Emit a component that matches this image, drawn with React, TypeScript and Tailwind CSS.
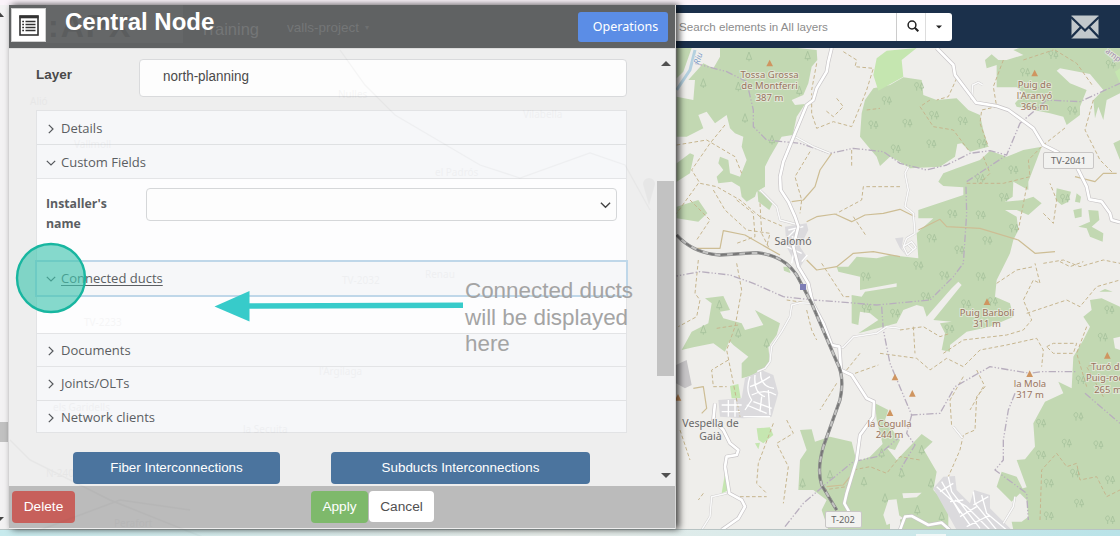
import React from "react";

const PINE = "M0 -14 L-8 8 H8 Z M0 8 V14";
const OAK = "M-7 12 V2 M-7 2 C-16 0 -14 -12 -7 -12 C0 -12 0 0 -7 2 M8 12 V4 M8 -12 L2 4 H14 Z";

// Map geometry is expressed in thirds of a pixel.
const forests = [
  "M150 144 L345 140 L440 150 L442 180 L425 200 L415 250 L400 285 L365 300 L375 315 L405 312 L380 350 L368 405 L335 410 L300 470 L285 500 L285 560 L260 575 L255 590 L230 605 L215 590 L210 560 L185 545 L145 550 L140 530 L160 510 L145 490 L150 470 L175 480 L180 520 L210 530 L230 480 L215 440 L220 410 L195 400 L180 385 L170 345 L135 370 L110 335 L85 345 L100 385 L50 410 L20 410 L20 290 L70 300 L75 240 L55 240 L100 190 L130 205 L150 170 Z",
  "M20 144 L65 144 L40 215 L20 235 Z",
  "M20 490 L60 460 L72 465 L60 520 L20 545Z",
  "M20 620 L85 600 L112 640 L85 665 L20 655Z",
  "M262 570 L310 605 L298 630 L265 605Z",
  "M340 800 L355 800 L362 820 L342 812Z",
  "M660 255 L700 232 L755 240 L760 285 L800 300 L860 295 L895 330 L930 345 L940 390 L955 440 L900 455 L875 430 L862 432 L855 470 L810 500 L720 505 L680 480 L660 470 L630 498 L620 470 L570 410 L575 340 L585 300 L610 265 Z",
  "M945 180 L965 163 L985 180 L1010 180 L1060 165 L1030 150 L1060 140 H1350 V280 L1310 300 L1300 360 L1285 320 L1275 355 L1270 300 L1300 270 L1260 222 L1170 205 L1160 212 L1200 250 L1250 270 L1230 320 L1230 345 L1190 375 L1180 350 L1140 340 L1040 320 L1035 310 L1060 280 L1040 262 L980 262 L980 195 L950 205Z",
  "M805 545 L820 520 L860 505 L930 480 L960 452 L1010 470 L1060 450 L1115 440 L1100 480 L1075 545 L1075 570 L1030 545 L1028 590 L1005 605 L1060 600 L1090 590 L1115 610 L1075 645 L1040 630 L1005 630 L1040 650 L1045 690 L1030 720 L1020 760 L1000 800 L980 840 L975 890 L1020 910 L1030 950 L960 980 L890 995 L840 1035 L840 1055 L815 1050 L825 1000 L810 970 L845 965 L790 960 L875 855 L865 845 L845 865 L770 950 L760 920 L740 915 L700 930 L680 970 L565 1000 L625 960 L600 940 L570 935 L565 975 L545 970 L545 885 L575 890 L585 875 L680 860 V850 L570 870 L570 830 L505 815 L500 800 L535 800 L560 770 L620 775 L660 765 L745 775 L740 700 L790 655 L745 655 L745 630 L880 585 V562 L820 558Z",
  "M1160 565 L1203 575 L1195 605 L1175 615 L1157 600Z", "M1220 580 L1233 590 L1230 608 L1215 605Z", "M1210 630 L1235 625 V650 L1215 655Z",
  "M1255 630 L1285 632 L1288 660 L1265 680 L1300 700 L1298 725 L1260 710 L1250 685 L1225 680 L1260 665Z", "M1330 430 L1350 420 V480Z",
  "M105 895 L160 888 L180 930 L150 935 L160 955 L215 970 L225 990 L280 975 L255 930 L330 970 L320 1005 L295 1040 L300 1090 L250 1125 L215 1135 V1090 L235 1070 L190 1035 L178 1022 L165 1055 L130 1030 L70 1042 L35 1050 L65 995 L115 970 L125 910Z",
  "M390 1290 L425 1288 L435 1325 L480 1310 L545 1325 L560 1385 L600 1370 L640 1330 L680 1380 L755 1302 L788 1325 L762 1350 L800 1415 L790 1470 L835 1520 V1590 H475 L455 1530 L470 1500 L430 1470 H385 L390 1380 L410 1350Z",
  "M615 1210 L655 1230 L645 1260 L690 1320 L675 1350 L640 1340 L620 1260Z",
  "M1260 900 L1295 895 L1350 920 V1590 H1030 L1025 1565 H1055 L1075 1550 L1070 1500 L1040 1470 L1070 1462 L1040 1380 L1065 1378 L1095 1340 L1090 1270 L1125 1205 L1180 1180 L1165 1145 L1205 1165 L1210 1070 L1240 1020 L1260 980 L1240 950 L1265 930Z",
  "M995 1415 L1040 1430 L1060 1470 L1025 1505 L980 1460Z", "M1288 875 L1305 867 L1328 875Z",
];
const meadows = ["M620 175 L650 152 L740 144 L695 180 L700 230 L625 272 L610 225Z", "M180 1158 L205 1152 L212 1195 L185 1195Z", "M260 1285 L300 1282 L310 1305 L280 1330 L265 1320Z", "M255 1330 L270 1328 L265 1348Z", "M165 1420 L178 1470 L155 1480Z", "M1335 215 L1350 205 V250Z"];
const clearings = ["M1330 1015 L1350 1010 V1050 L1335 1045Z", "M655 1500 L680 1498 L678 1540 L700 1555 L650 1575 L640 1545Z", "M660 1500 L680 1500 L695 1590 H660Z", "M697 1480 L755 1478 L740 1492 L700 1495Z"];
const built = ["M225 1135 L275 1110 L310 1125 L325 1180 L305 1250 L220 1255 L150 1250 L145 1200 L215 1195Z", "M790 1465 L820 1430 L855 1428 L860 1470 L900 1510 L912 1470 L960 1485 V1525 L1025 1590 H860 Z", "M345 680 L410 670 L415 690 L390 740 L410 770 L385 810 L350 740Z", "M675 715 L700 712 L695 745 L710 768 L690 745Z"];
const streets = [
  "M240 1130 Q225 1170 245 1200 L225 1230 M255 1125 Q250 1180 285 1190 M272 1115 Q270 1160 312 1165 M240 1160 Q270 1150 300 1130 M245 1185 Q285 1165 318 1185 M230 1215 L290 1240 M250 1205 L305 1225 M275 1190 L270 1235 M295 1170 L300 1245 M220 1250 H300",
  "M155 1215 H215 M155 1235 H210 M175 1200 V1250 M195 1200 V1250",
  "M800 1460 L850 1505 L900 1575 M815 1445 L870 1540 M835 1430 L845 1475 L930 1585 M855 1500 L890 1520 L960 1590 M910 1475 L915 1510 L980 1590 M935 1485 L950 1540 L1010 1590 M910 1515 L955 1490 M870 1550 L920 1520 M890 1580 L960 1545 M810 1475 L850 1450 M840 1505 L880 1500",
  "M355 690 L400 680 M365 710 L395 720 M350 740 L395 760 M385 685 L365 790 M345 720 L375 690 M395 785 L412 765",
];
const minor = [
  "M270 570 L320 620 L330 660 L375 672", "M420 910 L390 908 L365 915 L360 950 L335 995 L305 1040 L300 1085 L285 1105 L262 1115",
  "M170 1480 L125 1490 L120 1550 L95 1590", "M490 1040 L520 1042 L550 1010 L620 1000 L650 980 L690 985",
  "M715 500 L705 520 L715 570 L705 620 L730 640 L735 700", "M905 300 L908 255 L925 247 L938 255", "M375 410 L430 440 L480 460", "M850 1280 L878 1315", "M1000 1570 L1030 1520 L1035 1490",
  "M735 700 L710 715 L700 740 L712 765 L738 742 L725 725 L700 740 M715 735 L730 750",
];
const major = [
  "M485 144 L475 185 L470 215 L440 265 L430 300 L410 315 L375 400 L340 485 L330 530 L332 570 L355 605 L375 650 L385 680 L370 740 L385 800 L415 850 L428 910 L460 970 L485 1035 L508 1040 L513 1110 L545 1125 L590 1195 L612 1205 L610 1250 L570 1305 L560 1380 L545 1430 L530 1480 L523 1510 L540 1540",
  "M800 144 L850 195 L855 225 L918 308 L980 318 L1015 330 L1070 370 L1090 385 L1120 435 L1160 455 L1220 500 L1250 560 L1258 598 L1295 605 L1320 640 L1325 660 L1350 667",
  "M135 1210 L130 1260 L160 1290 L180 1330 L205 1350 L200 1365 L170 1370 L165 1400 L178 1480 L215 1500 L225 1520 L205 1555 L155 1590",
  "M690 1590 L705 1550 L725 1548 L775 1575 L815 1568 L840 1590",
];
const tracks = [
  "M20 435 L110 420 L195 470 L215 520", "M165 375 L120 430 L65 510 L90 550 L140 560 L210 600 L270 650 L340 680", "M85 550 L20 640", "M60 600 L120 660 L80 720", "M130 570 L165 630 L230 690 L300 700 L290 740", "M200 600 L250 640 L255 710 L200 730", "M270 610 L275 700 L300 750",
  "M440 190 L425 270", "M520 155 L560 180 L555 200 L610 205 L590 270 L570 320 L545 380 L490 365 L440 385 L425 340 L425 280", "M500 295 L520 320 L490 350 L465 330 M590 330 L630 325",
  "M420 455 L375 530 L395 600 L390 640", "M545 450 V500", "M690 560 L580 560 L575 600 L500 640", "M550 650 L590 710", "M780 300 L750 320 L790 380 L850 390 L895 450", "M860 235 L835 290 L800 300", "M1000 180 L970 260 L980 320 L935 330 L930 370 L955 440",
  "M890 550 L1000 550 L1080 530 L1075 480 L1120 435 L1190 380", "M940 470 L960 520 L930 550", "M1070 560 L1045 690", "M1120 640 L1150 670 L1160 600 L1140 550", "M1270 300 L1245 390 L1290 480 L1330 520", "M1120 790 L1180 780 L1230 800 L1300 780 L1350 790", "M1155 150 L1220 190 L1270 260", "M1060 180 L1150 150",
  "M85 780 L75 880 L90 900 L80 950 L25 980", "M200 790 L215 870 L195 980 L170 1050 L190 1150 L210 1250", "M140 985 L205 975", "M175 1080 L125 1110 L130 1160 L170 1160", "M410 930 L425 990 L440 1020", "M350 900 L420 910", "M500 1150 L450 1230", "M530 1110 L570 1060 M555 1120 L625 1095", "M350 1260 L370 1300 L320 1330 L355 1400 L340 1510", "M310 1270 L265 1390 L260 1450 L290 1480", "M210 1490 L290 1490 M100 1480 L85 1500", "M30 1290 L60 1380", "M455 790 L520 890 L545 890",
  "M630 1060 L740 1075 L780 1110 L830 1075 L880 1100 L930 1050 L1010 1035 L1100 1015 L1120 1050 L1115 1100", "M820 1060 L880 1020 L1010 1005 L1060 990 L1085 960 L1060 900 L1090 840 L1110 850 L1095 790", "M1130 1040 L1150 1030 H1220 L1210 1060 L1150 1060Z", "M1070 940 L1190 900 L1230 920 L1280 860 L1350 840", "M980 850 L1040 810 L1090 800", "M1170 785 L1200 800 L1240 785", "M690 990 L760 980 L810 1010 L840 1000", "M730 980 L735 1060",
  "M920 1110 L945 1160 L920 1190 L915 1290 L880 1305 L870 1350 L835 1430", "M880 1130 L840 1200 L845 1280", "M940 1160 L900 1230", "M1110 1560 L1115 1410 L1160 1360 L1190 1400 L1220 1390 L1230 1440 L1280 1430 L1310 1490 L1350 1470", "M1250 980 L1220 1060 L1250 1160 M1300 1190 L1250 1100 L1280 1090", "M460 1470 L530 1460 L550 1410 L600 1400 L650 1420 L690 1370 L750 1380",
];
const paths = ["M485 460 L450 510 L435 560 L400 600 L365 605", "M410 665 L440 650 L495 642 L545 665 L585 645 L640 640 L690 628 L735 650", "M75 745 L150 745 L160 692 L225 705 L330 765", "M745 690 L810 658 L830 680 L930 685 L1045 720 L1095 760 L1155 755", "M410 780 L440 810 L500 800 L550 760 L610 755 L690 770", "M1215 530 L1275 545 L1300 520 L1340 520", "M70 1165 L100 1160 L110 1225 L95 1240", "M470 1460 L520 1455 L540 1430"];
const borders = ["M75 190 L170 215 L230 245 L250 330 L250 380 L290 420 L390 430 L480 460 L550 445 L640 455 L690 490 L770 510 L830 495 L900 460 L960 452 L1010 465 L1050 370 L1130 300 L1230 305 L1350 250", "M890 545 L1010 465", "M888 560 L890 640 L880 790 L850 830 L780 900 L620 915 L500 905 L430 900 L340 890 L250 850 L180 825 L90 815 L20 828", "M635 920 L640 990 L660 1090 L725 1245 L810 1240 L855 1160 L960 1100 L1080 1120 L1115 1115 L1220 1115", "M1035 1180 L1015 1230 L1000 1320 L1000 1380 L975 1410 L1070 1480 L1075 1560", "M725 1245 L710 1300 L735 1335 L690 1410", "M345 1580 L400 1510 L470 1450 L550 1385 L620 1370 L690 1310", "M1245 1180 L1350 1270"];
const pines = [[237, 170], [413, 168], [100, 250], [205, 260], [225, 355], [388, 272], [306, 420], [148, 915], [100, 990], [290, 1030], [205, 1000], [480, 1425], [582, 1445], [645, 1495], [398, 1450], [635, 1360], [755, 1350], [783, 1450], [742, 1530], [695, 1420], [815, 1550]];
const oaks = [[650, 302], [610, 375], [677, 447], [747, 260], [792, 346], [878, 363], [784, 432], [712, 370], [935, 430], [1065, 217], [1150, 165], [1322, 193], [1207, 332], [1030, 510], [930, 535], [1002, 592], [847, 642], [932, 645], [785, 715], [868, 750], [952, 722], [745, 797], [1032, 685], [823, 827], [932, 830], [587, 830], [590, 925], [675, 940], [888, 912], [838, 987], [767, 890], [1318, 930], [1298, 1012], [1232, 1140], [1113, 1270], [1225, 1250], [1190, 1330], [1285, 1335], [1113, 1365], [1215, 1420], [1320, 1440], [1136, 1450], [1227, 1510], [1136, 1548], [1320, 1560], [1185, 595], [968, 905]];
const peaks = [[299, 190], [1094, 220], [951, 906], [675, 1132], [660, 1239], [727, 1181], [1079, 1122], [1312, 1067], [24, 1193]];
const labels: { x: number; y: number; lines: string[]; town?: boolean }[] = [
  { x: 769.5, y: 77.8, lines: ["Tossa Grossa", "de Montferri", "387 m"] },
  { x: 1034.5, y: 87.5, lines: ["Puig de", "l'Aranyó", "366 m"] },
  { x: 987, y: 316, lines: ["Puig Barbolí", "311 m"] },
  { x: 1030, y: 387, lines: ["la Mola", "317 m"] },
  { x: 889.5, y: 426.7, lines: ["la Cogulla", "244 m"] },
  { x: 1108, y: 370, lines: ["Turó de", "Puig-rodó", "265 m"] },
  { x: 793, y: 244.7, lines: ["Salomó"], town: true },
  { x: 710.5, y: 426.7, lines: ["Vespella de", "Gaià"], town: true },
];

const Lines = ({ d, ...p }: { d: string[] } & Omit<React.SVGProps<SVGPathElement>, "d">) => <path d={d.join(" ")} fill="none" strokeLinejoin="round" {...p} />;

function MapView() {
  const rail = ["M20 705 Q70 760 150 765 L260 758 Q340 765 380 825 L425 910 L500 1085 Q525 1130 510 1200 L460 1340 Q440 1410 455 1455 L500 1530"];
  return (
    <svg viewBox="676 48 444 481" className="block h-[481px] w-[444px] bg-[#efeeeb]">
      <g transform="translate(670 0) scale(0.33333)">
        <path d={forests.join(" ")} fill="#c2d8b2" />
        <path d={meadows.join(" ")} fill="#c5e6b0" />
        <path d={clearings.join(" ")} fill="#efeeeb" />
        <path d={built.join(" ")} fill="#dbdadd" />
        <path d="M18 1095 L50 1080 L65 1155 L45 1165 L18 1150Z" fill="#c8c6c8" />
        <g fill="none" stroke="#a5c09a" strokeWidth="2.4">
          {pines.map(([x, y]) => <path key={`${x}-${y}`} d={PINE} transform={`translate(${x} ${y})`} />)}
          {oaks.map(([x, y]) => <path key={`${x}-${y}`} d={OAK} transform={`translate(${x} ${y})`} />)}
        </g>
        <Lines d={["M75 150 L60 210 L20 270"]} stroke="#b4d0df" strokeWidth="9" />
        <Lines d={tracks} stroke="#c6b58e" strokeWidth="3" strokeDasharray="11 7" />
        <Lines d={paths} stroke="#cdbd94" strokeWidth="3.6" />
        <Lines d={borders} stroke="#b8aebe" strokeWidth="4" strokeDasharray="22 6 4 6 4 6" />
        <Lines d={minor} stroke="#cfcdcd" strokeWidth="7" />
        <Lines d={minor} stroke="#fafafa" strokeWidth="4.5" />
        <Lines d={streets} stroke="#fff" strokeWidth="4" />
        <Lines d={major} stroke="#c8c5c7" strokeWidth="12" />
        <Lines d={major} stroke="#fff" strokeWidth="8" />
        <Lines d={rail} stroke="#8a8a8a" strokeWidth="10" />
        <Lines d={rail} stroke="#c3c3c2" strokeWidth="6" />
        <Lines d={rail} stroke="#777" strokeWidth="6" strokeDasharray="20 17" />
        <rect x="390" y="852" width="18" height="18" fill="#7d7db5" />
        {peaks.map(([x, y]) => <path key={`${x}-${y}`} d={`M${x} ${y - 11} l10 20 h-20Z`} fill="#cf9560" />)}
      </g>
      <g fontFamily="'Noto Sans', sans-serif" textAnchor="middle" stroke="#f3f1ee" strokeWidth="2" strokeOpacity="0.6" paintOrder="stroke">
        {labels.map((l) => (
          <text key={l.lines[0]} fill={l.town ? "#696969" : "#9a7560"} fontSize={l.town ? 10.6 : 9.5}>
            {l.lines.map((t, i) => <tspan key={t} x={l.x} y={l.y + i * (l.town ? 13.5 : 11.4)}>{t}</tspan>)}
          </text>
        ))}
        <text transform="translate(699 65) rotate(-72)" textAnchor="start" x="0" y="0" fontSize="8.5" fill="#829fca" fontStyle="italic">Riu</text>
        <text transform="translate(1105 52) rotate(38)" textAnchor="start" fontSize="8" fill="#a590b0">amp</text>
      </g>
      <g fontFamily="'Noto Sans', sans-serif" fontSize="9.3" fill="#666" textAnchor="middle">
        <rect x="1043.5" y="152.5" width="50" height="16" rx="1.5" fill="#f2f2f0" stroke="#c9c7c6" />
        <text x="1068.5" y="163.7">TV-2041</text>
        <rect x="825.5" y="511.5" width="36" height="16" rx="1.5" fill="#f2f2f0" stroke="#c9c7c6" />
        <text x="843" y="522.7">T-202</text>
      </g>
    </svg>
  );
}

function Chevron({ open }: { open?: boolean }) {
  return (
    <svg viewBox="0 0 10 10" className="mr-[5px] h-[10px] w-[10px] shrink-0" fill="none" stroke="#55585c" strokeWidth="1.2">
      <path d={open ? "M0.8 2.8 L5 7 L9.2 2.8" : "M2.8 0.8 L7 5 L2.8 9.2"} />
    </svg>
  );
}

function Section({ title, open, className }: { title: string; open?: boolean; className: string }) {
  return (
    <div className={`flex items-center bg-[#f6f7f9] pl-[9px] font-['Open_Sans','Noto_Sans',sans-serif] text-[13px] font-medium text-[#5b5e62] ${className}`}>
      <Chevron open={open} />
      <span>{title}</span>
    </div>
  );
}

const ghosts: [number, number, string][] = [[338, 98, "Nulles"], [523, 118, "Vilabella"], [74, 148, "Vallmoll"], [435, 176, "el Padrós"], [342, 284, "TV-2032"], [425, 278, "Renau"], [84, 326, "TV-2233"], [319, 375, "l'Argilaga"], [53, 411, "els Garidells"], [243, 433, "la Secuita"], [46, 477, "N-240"], [114, 527, "Perafort"], [30, 105, "Alió"]];

export default function App() {
  return (
    <div className="relative flex h-[536px] w-[1120px] flex-col overflow-hidden bg-[#fbf3fa] pt-[5px] font-['Liberation_Sans',Arial,sans-serif]">
      <div className="flex h-[524px]">
        <aside className="flex w-[9px] shrink-0 flex-col bg-[#f3f2f3]">
          <svg viewBox="0 0 9 14" className="h-[14px] w-[9px]"><path d="M-4 12 L0 7.5 L4 12Z" fill="#444" /></svg>
          <div className="mt-[403px] h-[20px] w-[8px] bg-[#c1c1c1]" />
          <svg viewBox="0 0 9 20" className="mt-auto h-[20px] w-[9px]"><path d="M-4 8 H4 L0 12Z" fill="#444" /></svg>
        </aside>

        <main className="relative z-10 flex w-[667px] shrink-0 flex-col border-r border-[#d6d6d6] bg-[#eeeeee] shadow-[3px_0_7px_rgba(0,0,0,0.75)]">
          <header className="flex h-[43px] shrink-0 items-start bg-[#606263] pl-[2px] pr-[7px]">
            <div className="mt-[3px] flex h-[34px] w-[35px] items-center justify-center border border-[#d0d0d0] bg-white">
              <svg viewBox="0 0 20 21" className="h-[21px] w-[20px]" fill="none" stroke="#333">
                <rect x="1" y="1" width="18" height="19" strokeWidth="1.6" />
                <path d="M0.5 2 H19.5" strokeWidth="2.6" />
                <path d="M6.5 6.5 H16.5 M6.5 9.5 H16.5 M6.5 12.5 H16.5 M6.5 15.5 H16.5 M3.2 6.5 H5 M3.2 9.5 H5 M3.2 12.5 H5 M3.2 15.5 H5" strokeWidth="1.4" />
              </svg>
            </div>
            <div className="relative h-[38px] w-[137px] bg-[#656768]">
              <h1 className="absolute left-[19px] top-[3px] z-10 whitespace-nowrap text-[24px] font-bold leading-[28px] text-white">Central Node</h1>
              <span className="absolute left-[2px] top-[5px] text-[32px] font-bold leading-[32px] tracking-[2px] text-[#5b5d5e]">:APX</span>
            </div>
            <span className="ml-[17px] mt-[14px] w-[87px] text-[16.5px] leading-[20px] text-[#747677]">Training</span>
            <span className="mt-[15px] text-[13.5px] leading-[16px] text-[#747677]">valls-project</span>
            <span className="ml-[6px] mt-[17px] text-[8px] text-[#6e7071]">▾</span>
            <button className="ml-auto mt-[7px] h-[30px] w-[90px] rounded-[3px] bg-[#5b8de6] pl-[5px] font-['Noto_Sans',sans-serif] text-[12.5px] text-white">Operations</button>
          </header>

          <div className="flex h-[438px] border-t border-[#dcdcdc]">
            <div className="flex w-[618px] shrink-0 flex-col pl-[27px] pt-[10px]">
              <div className="flex h-[38px] items-start text-[13px] text-[#4a4a4a]">
                <label className="w-[103px] pt-[8px] text-[13.5px] font-bold leading-[16px]">Layer</label>
                <div className="h-[38px] w-[488px] rounded-[4px] border border-[#d9dadc] bg-[#fdfdfd] pl-[23px] pt-[8px] text-[14px] leading-[16px]"><span className="inline-block origin-left scale-x-[0.96]">north-planning</span></div>
              </div>
              <div className="mt-[13px] flex h-[323px] w-[591px] flex-col border border-[#e2e3e5] bg-[#fdfdfe]">
                <Section title="Details" className="h-[34px] border-b border-[#dfe1e3] pt-[3px]" />
                <Section title="Custom Fields" open className="h-[34px] border-b border-[#e4e5e7] pt-[3px]" />
                <div className="flex h-[81px] pl-[9px] pr-[9px] pt-[9px]">
                  <label className="w-[100px] pt-[6px] font-['Open_Sans','Noto_Sans',sans-serif] text-[12.3px] font-bold leading-[19.5px] text-[#5b5e62]">Installer's<br />name</label>
                  <div className="flex h-[33px] flex-1 items-center justify-end rounded-[4px] border border-[#d5d7d9] bg-[#fdfdfd] pr-[5px]">
                    <svg viewBox="0 0 12 8" className="h-[8px] w-[11px]" fill="none" stroke="#444" strokeWidth="1.5"><path d="M1 1.5 L6 6.5 L11 1.5" /></svg>
                  </div>
                </div>
                <Section title="Connected ducts" open className="-mx-[2px] h-[37px] shrink-0 border-2 border-[#bfd7e9] underline underline-offset-2" />
                <div className="h-[36px] shrink-0" />
                <Section title="Documents" className="h-[34px] border-y border-[#e3e4e6] pt-[2px]" />
                <Section title="Joints/OLTs" className="h-[33px]" />
                <Section title="Network clients" className="h-[32px] border-t border-[#e1e2e4] pt-[2px]" />
              </div>
              <div className="mt-[19px] flex h-[32px] pl-[37px] text-[13.4px] text-white">
                <button className="w-[207px] rounded-[4px] bg-[#4b749e]">Fiber Interconnections</button>
                <button className="ml-[51px] w-[259px] rounded-[4px] bg-[#4b749e]">Subducts Interconnections</button>
              </div>
            </div>
            <div className="ml-auto flex w-[19px] flex-col items-center pt-[11px]">
              <svg viewBox="0 0 10 6" className="h-[6px] w-[10px]"><path d="M0 6 L5 1 L10 6Z" fill="#505050" /></svg>
              <div className="mt-[115px] h-[195px] w-[17px] bg-[#c2c2c2]" />
              <svg viewBox="0 0 10 6" className="mt-[97px] h-[6px] w-[10px]"><path d="M0 0 L5 5 L10 0Z" fill="#505050" /></svg>
            </div>
          </div>

          <footer className="flex h-[43px] items-start border-b border-[#eeeeee] bg-[#bbbbbb] pl-[3px] pt-[5px] text-[13.7px]">
            <button className="h-[32px] w-[63px] rounded-[4px] bg-[#c7605b] text-white">Delete</button>
            <button className="ml-[236px] h-[32px] w-[57px] rounded-[4px] bg-[#7eb96b] text-white">Apply</button>
            <button className="ml-[1px] h-[31px] w-[65px] rounded-[4px] bg-white pt-[1px] text-[#505050]">Cancel</button>
          </footer>
        </main>

        <section className="flex w-[444px] shrink-0 flex-col">
          <nav className="flex h-[43px] items-start bg-[#1b304b] pt-[8px] text-[11.6px] text-[#8c8c8c]">
            <div className="flex h-[28px] w-[221px] items-center border-r border-[#ccc] bg-white pl-[3px]">Search elements in All layers</div>
            <button className="flex h-[28px] w-[29px] items-center justify-center border-r border-[#ddd] bg-white pb-[2px] pl-[4px]">
              <svg viewBox="0 0 12 12" className="h-[12px] w-[12px]" fill="none" stroke="#222" strokeWidth="1.5"><circle cx="5" cy="5" r="3.9" /><path d="M7.8 7.8 L11.3 11.3" strokeWidth="2" /></svg>
            </button>
            <button className="flex h-[28px] w-[26px] items-center justify-center rounded-r-[3px] bg-white">
              <svg viewBox="0 0 6 4" className="h-[4px] w-[6px]"><path d="M0 0.5 H6 L3 3.5Z" fill="#222" /></svg>
            </button>
            <svg viewBox="0 0 28 24" className="ml-[119px] mt-[2px] h-[24px] w-[28px]">
              <path d="M0.5 0.5 H27.5 V23.5 H0.5Z" fill="#c2c8cc" />
              <path d="M0 2 L14 15.5 L28 2 M0 22.5 L10 12 M28 22.5 L18 12" fill="none" stroke="#1b304b" strokeWidth="2.3" />
            </svg>
          </nav>
          <MapView />
        </section>
      </div>
      <div className="flex h-[7px] border-t border-[#b7c3c3] bg-gradient-to-r from-[#c7eaed] via-[#e9eeeb] to-[#b9e3e8]">
        <div className="ml-[916px] mt-[4px] h-[2px] w-[30px] bg-[#f1f7f7]" />
      </div>

      <svg viewBox="0 0 1120 536" className="pointer-events-none absolute inset-0 z-20 h-[536px] w-[1120px]">
        <g fontFamily="'Noto Sans', sans-serif" fontSize="10" fill="#555" opacity="0.045">
          {ghosts.map(([x, y, t]) => <text key={t} x={x} y={y}>{t}</text>)}
          <path d="M340 50 L365 85 L395 115 L480 165 L520 178 L590 153 L625 165 L650 210" fill="none" stroke="#555" strokeWidth="1.2" />
          <path d="M10 440 L30 460 L110 500 L210 540 M40 530 L120 500 L190 510" fill="none" stroke="#555" strokeWidth="1.5" />
          <path d="M643 184 a6 6 0 1 1 12 0 L649 205Z" />
        </g>
        <path d="M249 306 L463 305.2" stroke="#37cbca" strokeWidth="5.6" />
        <path d="M214.500 306.500 L249.500 291 V321.500Z" fill="#37cbca" />
        <circle cx="51" cy="278" r="34" fill="#3fc4ae" fillOpacity="0.63" stroke="#18b6a0" strokeWidth="2.4" />
      </svg>
      <p className="absolute left-[465px] top-[278px] z-20 w-[180px] text-[22.4px] leading-[26.5px] text-[#a4a4a4]">Connected ducts<br />will be displayed<br />here</p>
    </div>
  );
}
